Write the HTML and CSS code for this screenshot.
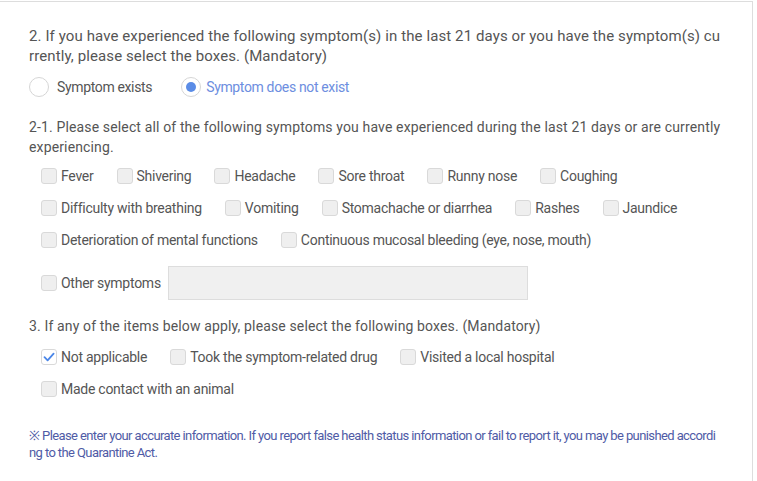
FILE: index.html
```html
<!DOCTYPE html>
<html lang="en">
<head>
<meta charset="utf-8">
<link rel="stylesheet" href="styles.css">
</head>
<body>
<div class="panel">
  <p class="q q-first">2. If you have experienced the following symptom(s) in the last 21 days or you have the symptom(s) currently, please select the boxes. (Mandatory)</p>
  <div class="radios">
    <label class="radio"><span class="rb"></span><span>Symptom exists</span></label>
    <label class="radio on"><span class="rb"><span class="dot"></span></span><span>Symptom does not exist</span></label>
  </div>
  <p class="q q-sub">2-1. Please select all of the following symptoms you have experienced during the last 21 days or are currently experiencing.</p>
  <div class="checks">
    <div class="row">
      <label class="cb"><span class="box"></span><span>Fever</span></label>
      <label class="cb"><span class="box"></span><span>Shivering</span></label>
      <label class="cb"><span class="box"></span><span>Headache</span></label>
      <label class="cb"><span class="box"></span><span>Sore throat</span></label>
      <label class="cb"><span class="box"></span><span>Runny nose</span></label>
      <label class="cb"><span class="box"></span><span>Coughing</span></label>
    </div>
    <div class="row">
      <label class="cb"><span class="box"></span><span>Difficulty with breathing</span></label>
      <label class="cb"><span class="box"></span><span>Vomiting</span></label>
      <label class="cb"><span class="box"></span><span>Stomachache or diarrhea</span></label>
      <label class="cb"><span class="box"></span><span>Rashes</span></label>
      <label class="cb"><span class="box"></span><span>Jaundice</span></label>
    </div>
    <div class="row">
      <label class="cb"><span class="box"></span><span>Deterioration of mental functions</span></label>
      <label class="cb"><span class="box"></span><span>Continuous mucosal bleeding (eye, nose, mouth)</span></label>
    </div>
    <div class="row row-other">
      <label class="cb cb-other"><span class="box"></span><span>Other symptoms</span></label>
      <div class="other-input"></div>
    </div>
  </div>
  <p class="q q-three">3. If any of the items below apply, please select the following boxes. (Mandatory)</p>
  <div class="checks checks-three">
    <div class="row">
      <label class="cb checked"><span class="box"><svg viewBox="0 0 16 16" width="16" height="16"><path d="M3.5 8.2 L6.6 11.3 L12.6 4.6" fill="none" stroke="#4a86e8" stroke-width="1.8" stroke-linecap="round" stroke-linejoin="round"/></svg></span><span>Not applicable</span></label>
      <label class="cb"><span class="box"></span><span>Took the symptom-related drug</span></label>
      <label class="cb"><span class="box"></span><span>Visited a local hospital</span></label>
    </div>
    <div class="row">
      <label class="cb"><span class="box"></span><span>Made contact with an animal</span></label>
    </div>
  </div>
  <p class="note">※ Please enter your accurate information. If you report false health status information or fail to report it, you may be punished according to the Quarantine Act.</p>
</div>
</body>
</html>
```

FILE: styles.css
```css
html, body {
  margin: 0;
  padding: 0;
  background: #fff;
}
body {
  font-family: Roboto, "Liberation Sans", sans-serif;
  color: #555;
}
.panel {
  margin-top: 1px;
  width: 753px;
  height: 480px;
  box-sizing: border-box;
  padding: 24px 0 0 29px;
  border-top: 1px solid #ddd;
  border-right: 1px solid #ddd;
}
.q {
  margin: 0;
  font-size: 14px;
  letter-spacing: 0.14px;
  line-height: 20px;
  color: #555;
}
.q-first {
  width: 694px;
  font-size: 15px;
  letter-spacing: 0.1px;
  word-break: break-all;
}
.radios {
  display: flex;
  align-items: center;
  gap: 29px;
  margin-top: 11px;
  height: 20px;
}
.radio {
  display: flex;
  align-items: center;
  gap: 8px;
  font-size: 14px;
  letter-spacing: -0.35px;
  color: #555;
}
.radio.on { color: #6d8ee0; gap: 5px; }
.rb {
  width: 20px;
  height: 20px;
  box-sizing: border-box;
  border: 1px solid #d6d6d6;
  border-radius: 50%;
  background: #fff;
  display: flex;
  align-items: center;
  justify-content: center;
}
.dot {
  width: 10px;
  height: 10px;
  border-radius: 50%;
  background: #5b8ce6;
}
.q-sub { margin-top: 20px; width: 700px; }
.checks {
  margin-top: 3px;
  padding-left: 12px;
}
.row {
  display: flex;
  align-items: center;
  height: 32px;
}
.cb {
  display: flex;
  align-items: center;
  gap: 4px;
  margin-right: 23px;
  font-size: 14px;
  letter-spacing: -0.26px;
  color: #555;
  white-space: nowrap;
}
.box {
  width: 16px;
  height: 16px;
  box-sizing: border-box;
  border: 1px solid #d9d9d9;
  border-radius: 3px;
  background: #efefef;
  display: flex;
}
.cb.checked .box { background: #fff; }
.box svg { margin: -1px; }
.row-other {
  margin-top: 10px;
  height: 34px;
}
.cb-other { margin-right: 7px; }
.other-input {
  width: 360px;
  height: 34px;
  box-sizing: border-box;
  border: 1px solid #ddd;
  background: #f0f0f0;
}
.q-three { margin-top: 16px; }
.checks-three { margin-top: 5px; }
.note {
  margin: 22px 0 0;
  width: 689px;
  font-size: 13px;
  line-height: 17px;
  letter-spacing: -0.6px;
  word-break: break-all;
  color: #4f5ba6;
}
```
